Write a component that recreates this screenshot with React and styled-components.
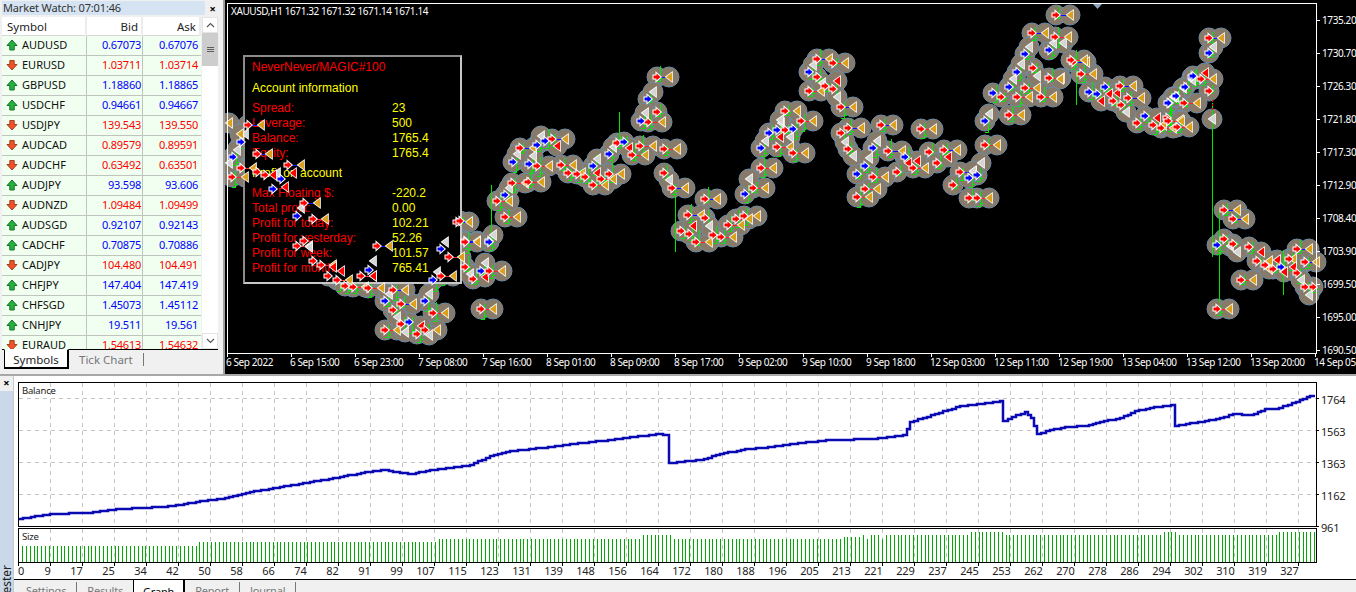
import React from "react";
import styled, { createGlobalStyle } from "styled-components";

const Global = createGlobalStyle`
  html, body { margin: 0; padding: 0; width: 1356px; height: 592px; overflow: hidden; background: #f0f0f0; }
  * { box-sizing: border-box; }
`;
const UI = `"Noto Sans", "Liberation Sans", sans-serif`;

const Page = styled.div`
  width: 1356px; height: 592px; display: flex; flex-direction: column; overflow: hidden;
  font-family: ${UI}; font-size: 11px; color: #000; background: #f0f0f0;
`;
const TopRow = styled.div`
  height: 376px; flex: none; display: flex; border-bottom: 2px solid #a8a8a8;
`;
const MarketPanel = styled.section`
  width: 225px; flex: none; display: flex; flex-direction: column; padding: 1px 3px 0 2px;
  border-right: 2px solid #a0a0a0; background: #f0f0f0;
`;
const TitleBar = styled.div`
  height: 14px; display: flex; align-items: center; justify-content: space-between; flex: none;
  font-size: 11px; line-height: 13px; letter-spacing: -0.15px;
`;
const TitleText = styled.div`
  width: 203px; height: 14px; background: #d5e3f2; padding-left: 1px; color: #333;
`;
const CloseBtn = styled.span`
  width: 15px; text-align: center; font-size: 11px; font-weight: 700; line-height: 13px; color: #000;
`;
const MarketBody = styled.div`
  margin-top: 2px; height: 332px; flex: none; display: flex; overflow: hidden;
`;
const Table = styled.div`
  width: 199px; flex: none; display: flex; flex-direction: column; overflow: hidden; background: #f0fff0;
`;
const HeadRow = styled.div`
  display: grid; grid-template-columns: 85px 56px 58px; height: 19px; flex: none; background: #fff;
  border-bottom: 1px solid #d8d8d8;
`;
const HeadCell = styled.div`
  padding: 0 3px 0 5px; line-height: 20px; font-size: 11.5px; color: #222;
  text-align: ${(p) => (p.$right ? "right" : "left")};
  border-right: 2px solid #ececec;
`;
const Row = styled.div`
  display: grid; grid-template-columns: 85px 56px 58px; height: 20px; flex: none;
  background: #f0fff0; border-bottom: 1px solid #bfc4bf;
`;
const SymCell = styled.div`
  display: flex; align-items: center; gap: 4px; padding: 0 0 2px 4px; color: #111; font-size: 11px;
  border-right: 1px solid #bfc4bf;
`;
const PriceCell = styled.div`
  text-align: right; line-height: 17px; font-size: 11px; letter-spacing: -0.25px;
  padding-right: ${(p) => (p.$last ? 3 : 1)}px;
  color: ${(p) => (p.$up ? "#0000ff" : "#ff0000")};
  border-right: ${(p) => (p.$last ? "none" : "1px solid #bfc4bf")};
`;
const Scroll = styled.div`
  width: 16px; margin-left: 1px; flex: none; display: flex; flex-direction: column; background: #fff;
`;
const ScrollBtn = styled.div`
  height: 16px; flex: none; display: flex; align-items: center; justify-content: center;
  border: 1px solid #e4e4e4; background: #fff;
`;
const Thumb = styled.div`
  height: 33px; flex: none; background: #cdcdcd; display: flex; flex-direction: column;
  align-items: center; justify-content: center; gap: 1px;
`;
const Grip = styled.span`
  width: 7px; height: 1px; background: #5c5c5c;
`;
const Track = styled.div`
  flex: 1;
`;
const TabBar = styled.div`
  height: 24px; flex: none; display: flex; align-items: flex-start; padding-left: 2px;
  border-top: 1px solid #000; margin-right: 2px;
`;
const ActiveTab = styled.div`
  height: 20px; width: 65px; margin-top: -1px; background: #fff; text-align: center;
  border: 1px solid #000; border-top-color: #fff; border-right-width: 2px; border-bottom-width: 2px;
  line-height: 19px; font-size: 11.5px; color: #222;
`;
const IdleTab = styled.div`
  height: 19px; padding: 0 10px; line-height: 19px; font-size: 11.5px; color: #777;
`;
const TabDivider = styled.span`
  width: 1px; height: 13px; margin-top: 3px; background: #777;
`;
const ChartPane = styled.section`
  position: relative; flex: 1; background: #000; overflow: hidden;
`;
const ChartSvg = styled.svg`
  position: absolute; inset: 0; display: block;
  text { font-family: ${UI}; font-size: 10px; fill: #fff; letter-spacing: -0.4px; }
`;
const InfoPanel = styled.div`
  position: absolute; left: 18px; top: 55px; width: 219px; height: 229px; padding: 3px 7px;
  background: #000;
  border: 2px solid #8c8c8c; border-right-color: #c8c8c8; border-bottom-color: #c8c8c8;
  font-family: "Liberation Sans", Arial, sans-serif; font-size: 12px; line-height: 15px;
`;
const InfoHead = styled.div`
  height: 15px; margin: ${(p) => p.$gap || 0}px 0 0; color: ${(p) => (p.$red ? "#ff0000" : "#ffff00")};
`;
const InfoRow = styled.div`
  display: grid; grid-template-columns: 140px 1fr; height: 15px; margin-top: ${(p) => p.$gap || 0}px;
`;
const InfoLabel = styled.span`
  color: #ff0000;
`;
const InfoValue = styled.span`
  color: #ffff00;
`;
const Tester = styled.section`
  flex: 1; display: flex; min-height: 0;
`;
const TesterSide = styled.div`
  width: 13px; flex: none; display: flex; flex-direction: column; position: relative; overflow: hidden;
`;
const SideClose = styled.div`
  height: 15px; flex: none; text-align: center; font-size: 11px; font-weight: 700; line-height: 14px;
`;
const SideStrip = styled.div`
  flex: 1; background: #c9d9ea; display: flex; align-items: flex-end; justify-content: center;
`;
const SideLabel = styled.span`
  writing-mode: vertical-rl; transform: rotate(180deg); font-size: 12px; line-height: 12px; color: #222;
  margin-bottom: -7px;
`;
const TesterMain = styled.div`
  flex: 1; display: flex; flex-direction: column; min-width: 0; border-left: 1px solid #c8c8c8;
`;
const GraphWrap = styled.div`
  height: 203px; flex: none; background: #fff;
`;
const GraphSvg = styled.svg`
  display: block;
  text { font-family: ${UI}; font-size: 11px; fill: #222; letter-spacing: -0.2px; }
`;
const ChartCaption = styled.text`
  font-size: 9.5px !important;
`;
const BottomTabs = styled.div`
  flex: 1; display: flex; align-items: flex-start; border-top: 1px solid #000; padding-left: 2px; overflow: hidden;
  background: #f0f0f0;
`;
const BottomTab = styled.div`
  height: 24px; padding: 3px 10px 0; font-size: 11px; line-height: 16px; flex: none; letter-spacing: -0.2px;
  color: ${(p) => (p.$active ? "#000" : "#777")};
  background: ${(p) => (p.$active ? "#fff" : "transparent")};
  ${(p) => p.$active && "border-left: 1px solid #000; border-right: 2px solid #000; margin-top: -1px; padding: 4px 9px 0; border-top: 1px solid #fff;"}
`;
const BottomDiv = styled.span`
  width: 1px; height: 11px; margin-top: 2px; flex: none; background: #777;
`;

/* ---------- data ---------- */
const SYMBOLS = [
  ["AUDUSD", 1, "0.67073", "0.67076"], ["EURUSD", 0, "1.03711", "1.03714"], ["GBPUSD", 1, "1.18860", "1.18865"],
  ["USDCHF", 1, "0.94661", "0.94667"], ["USDJPY", 0, "139.543", "139.550"], ["AUDCAD", 0, "0.89579", "0.89591"],
  ["AUDCHF", 0, "0.63492", "0.63501"], ["AUDJPY", 1, "93.598", "93.606"], ["AUDNZD", 0, "1.09484", "1.09499"],
  ["AUDSGD", 1, "0.92107", "0.92143"], ["CADCHF", 1, "0.70875", "0.70886"], ["CADJPY", 0, "104.480", "104.491"],
  ["CHFJPY", 1, "147.404", "147.419"], ["CHFSGD", 1, "1.45073", "1.45112"], ["CNHJPY", 1, "19.511", "19.561"],
  ["EURAUD", 0, "1.54613", "1.54632"],
];
const TIME_LABELS = ["6 Sep 2022","6 Sep 15:00","6 Sep 23:00","7 Sep 08:00","7 Sep 16:00","8 Sep 01:00","8 Sep 09:00","8 Sep 17:00","9 Sep 02:00","9 Sep 10:00","9 Sep 18:00","12 Sep 03:00","12 Sep 11:00","12 Sep 19:00","13 Sep 04:00","13 Sep 12:00","13 Sep 20:00","14 Sep 05:00"];
const PRICES = ["1735.20","1730.70","1726.30","1721.80","1717.30","1712.90","1708.40","1703.90","1699.50","1695.00","1690.50"];
const BAL_LABELS = [["1764",401],["1563",433],["1363",465],["1162",497],["961",529]];
const IDX = [0,9,17,25,34,42,50,58,66,74,82,91,99,107,115,123,131,139,148,156,164,172,180,188,196,205,213,221,229,237,245,253,262,270,278,286,294,302,310,319,327];

const GROUPS = [
  { o:[225,40], s:3,
    r:[[47,385,85],[22,412,60]], b:[[70,255,108],[95,343,132],[190,376,228],[238,490,277]],
    ra:[95,397,120,405], ba:[47,307,23,350,167,418,143,448],
    w:[60,283,36,330,13,368,155,400], x:[205,400,180,440,145,405], g:[13,250,45,283] },
  { o:[225,200], s:3,
    r:[[263,58,300],[335,240,372],[383,261,420],[430,264,468],[623,340,660],[480,391,516],[600,391,637],[648,227,685],[672,172,708],[792,212,830],[767,328,805],[215,138,252],[407,229,445],[287,196,325]],
    b:[[238,10,277],[695,65,733],[455,138,493],[503,270,540],[528,313,565],[720,124,757]],
    ra:[238,122,263,183,310,229,360,258,503,330,528,372,575,403,720,200,744,237],
    ba:[215,48,432,210,480,303,552,367,600,303,623,240,648,148,792,124,768,212],
    w:[228,25,445,182,493,283,515,350,540,395,612,405,613,283,637,215,660,127,805,105,735,222,780,190,252,140],
    x:[347,213,445,227,588,378,780,230,325,202], g:[] },
  { o:[460,60], s:3,
    r:[[565,187,605],[613,268,652],[540,259,578],[517,285,555],[325,340,365],[350,343,365],[422,357,458],[398,376,435],[447,343,484],[303,316,340],[230,319,268],[157,369,195],[205,367,243],[134,471,172],[708,547,747],[782,532,820],[805,495,843],[829,477,868],[853,468,892],[878,385,916],[902,325,940],[950,262,990],[110,424,146]],
    b:[[590,52,628],[277,238,316],[181,265,220],[14,545,52],[637,385,675],[734,418,771],[685,466,722],[0,484,27]],
    ra:[590,157,470,250,375,350,613,338,734,475,662,512,686,523,758,524,975,211,974,154],
    ba:[565,118,543,184,493,246,447,283,398,318,254,243,230,254,207,313,158,306,134,405,86,547,854,403,902,265,926,219,950,211],
    w:[580,97,555,160,460,262,412,298,243,228,220,288,172,283,148,383,100,525,628,360,747,497,868,358,916,243,964,190],
    x:[507,265,410,338,290,258,698,497], g:[] },
  { o:[780,40], s:3,
    r:[[158,70,196],[86,154,124],[278,412,316],[254,448,292],[230,472,268],[398,385,436],[422,268,460],[62,244,100],[38,340,76],[590,475,628],[614,316,652],[686,226,724],[710,170,748],[735,145,772],[782,172,820],[806,115,843]],
    b:[[110,57,148],[182,202,220],[205,265,244],[303,256,340],[325,334,365],[14,213,52],[493,330,531],[541,397,580]],
    ra:[110,112,134,138,158,148,182,280,205,328,350,396,447,336,472,370,14,270,518,435,566,475,662,172,758,85],
    ba:[86,97,278,323,254,379,230,403,374,352,38,267,590,405,566,415,615,243,638,160,686,141,710,96,734,43,806,30],
    w:[100,75,125,130,172,170,195,305,220,348,292,303,268,355,30,290,0,240,604,368,580,392,628,222,700,118,724,72,748,20,770,108,820,8,848,10],
    x:[172,122,410,363,385,370,505,350,0,292], g:[28,323] },
  { o:[1150,0], s:3,
    r:[[152,238,190],[103,310,141]], b:[[176,115,214]],
    ra:[176,274,50,355], ba:[176,160,126,232,104,262,78,288,56,310],
    w:[190,140,125,240,70,292,185,356], x:[165,218,20,355], g:[90,360] },
  { o:[1060,60], s:3,
    r:[[62,43,100],[278,196,310],[302,205,340],[325,183,362],[350,200,388],[375,130,412],[422,58,460],[542,660,580],[470,748,508],[638,628,626]],
    b:[[38,5,77],[181,78,220],[205,115,243],[493,451,531],[518,478,556],[710,568,748],[734,607,768],[686,598,700]],
    ra:[158,123,182,135,230,190,447,94,493,538,518,553,566,562,590,603,614,615,710,638,734,680,758,682],
    ba:[86,97,110,103,134,80,254,169,325,130,350,108,375,79,398,48,470,555,662,620],
    w:[197,155,458,183,510,558,532,575,724,660,748,705,368,85,345,110],
    x:[122,123,148,103,172,100,290,175,435,38,602,577,650,600,672,637,700,620], g:[0,58,626,603] },
  { o:[0,0], s:1,
    r:[[1055,37,1068],[1071,60,1084]],
    b:[[1056,15,1070],[1032,33,1045]],
    ra:[], ba:[], w:[], x:[], g:[] },
];

function buildMarkers() {
  const seen = new Set();
  const arrows = [], tris = [], links = [];
  const add = (list, kind, x, y, c) => {
    const k = kind + c + Math.round(x / 3) + "_" + Math.round(y / 3);
    if (seen.has(k)) return false;
    seen.add(k);
    list.push({ x, y, c });
    return true;
  };
  const pairs = (arr, fn) => { for (let i = 0; i < arr.length; i += 2) fn(arr[i], arr[i + 1]); };
  GROUPS.forEach(({ o, s, r, b, ra, ba, w, x, g }) => {
    const X = (v) => Math.round(o[0] + v / s);
    const Y = (v) => Math.round(o[1] + v / s);
    const pair = (p, line) => {
      const added = add(arrows, "a", X(p[0]), Y(p[1]), "#ff0000");
      add(tris, "t", X(p[2]), Y(p[1]), "#daa01e");
      if (added) links.push({ x1: X(p[0]), x2: X(p[2]), y: Y(p[1]), c: line });
    };
    r.forEach((p) => pair(p, "#ff2020"));
    b.forEach((p) => pair(p, "#1010ff"));
    pairs(ra, (a, c) => add(arrows, "a", X(a), Y(c), "#ff0000"));
    pairs(ba, (a, c) => add(arrows, "a", X(a), Y(c), "#0000ff"));
    pairs(w, (a, c) => add(tris, "t", X(a), Y(c), "#d4d4d4"));
    pairs(x, (a, c) => add(tris, "t", X(a), Y(c), "#ff0000"));
    pairs(g, (a, c) => add(tris, "t", X(a), Y(c), "#daa01e"));
  });
  return { arrows, tris, links };
}
const MARKS = buildMarkers();

function rnd(i) {
  const v = Math.sin(i * 12.9898 + 4.1) * 43758.5453;
  return v - Math.floor(v);
}
const LONG_WICKS = [[1212,103,257],[1219,210,302],[619,112,140],[675,195,252],[491,185,240],[1076,70,105],[1283,250,295]];

const BAL = [[19,521],[35,518],[50,516],[85,515],[100,513],[120,511],[140,510],[160,509],[180,507],[200,503],[225,500],[250,494],[280,489],[310,484],[340,479],[365,474],[385,472],[400,475],[412,476],[430,472],[450,470],[470,467],[490,458],[510,453],[540,450],[570,446],[600,443],[630,439],[660,436],[666,437],[669,465],[685,463],[700,462],[720,456],[745,451],[760,450],[790,446],[830,442],[870,441],[903,437],[910,424],[935,416],[960,408],[985,405],[1000,403],[1003,423],[1012,419],[1025,414],[1031,420],[1037,436],[1050,432],[1065,429],[1085,428],[1100,424],[1120,420],[1135,413],[1150,410],[1171,407],[1175,428],[1190,425],[1205,423],[1220,420],[1233,416],[1250,417],[1265,411],[1275,411],[1300,402],[1310,398],[1315,398]];
function balPath() {
  const out = [];
  let last = BAL[0][1];
  for (let i = 0; i < BAL.length - 1; i++) {
    const [x0, y0] = BAL[i], [x1, y1] = BAL[i + 1];
    const n = Math.max(1, Math.round((x1 - x0) / 4));
    for (let k = 0; k < n; k++) {
      const x = Math.round(x0 + ((x1 - x0) * k) / n);
      const y = Math.round(y0 + ((y1 - y0) * k) / n);
      out.push(`${x},${last}`, `${x},${y}`);
      last = y;
    }
  }
  out.push(`1315,${last}`);
  return out.join(" ");
}
function barTop(x) {
  if (x < 197) return 548;
  if (x < 435) return 544;
  if (x < 640) return 541;
  if (x < 672) return 537;
  if (x < 843) return 541;
  if (x < 860) return 539;
  if (x < 888) return Math.round(x) % 3 ? 537 : 541;
  if (x < 970) return 537;
  if (x < 1004) return 534;
  if (x < 1162) return 537;
  if (x < 1176) return 534;
  if (x < 1279) return 537;
  return 534;
}

/* ---------- drawings ---------- */
const UpIcon = () => (
  <svg width="12" height="12" viewBox="0 0 12 12">
    <path d="M6 1 L11 6.5 H8.2 V11 H3.8 V6.5 H1 Z" fill="#22b33c" stroke="#1b6e2a" strokeWidth="1" />
  </svg>
);
const DownIcon = () => (
  <svg width="12" height="12" viewBox="0 0 12 12">
    <path d="M6 11 L11 5.5 H8.2 V1.5 H3.8 V5.5 H1 Z" fill="#f0522a" stroke="#a8401f" strokeWidth="1" />
  </svg>
);
const Chevron = ({ down }) => (
  <svg width="9" height="6" viewBox="0 0 9 6">
    <path d={down ? "M1 1 L4.5 4.5 L8 1" : "M1 5 L4.5 1.5 L8 5"} fill="none" stroke="#555" strokeWidth="1.2" />
  </svg>
);

function ChartUnder() {
  const { arrows, tris } = MARKS;
  const all = [...arrows, ...tris];
  return (
    <ChartSvg width="1131" height="374" viewBox="225 0 1131 374">
      {all.map((m, i) => (
        <circle key={i} cx={m.x} cy={m.y} r="10" fill="#877a68" stroke="#6f8ca6" strokeWidth="1" />
      ))}
      {arrows.map((m, i) => {
        const wx = m.x + 3;
        const up = 3 + Math.round(rnd(i) * 9);
        const dn = 3 + Math.round(rnd(i + 50) * 9);
        return (
          <g key={i} stroke="#00e800" strokeWidth="1" shapeRendering="crispEdges">
            <line x1={wx} x2={wx} y1={m.y - up} y2={m.y + dn} />
            <line x1={wx - 3} x2={wx} y1={m.y + dn - 1} y2={m.y + dn - 1} />
            <line x1={wx} x2={wx + 3} y1={m.y + dn - 4} y2={m.y + dn - 4} />
          </g>
        );
      })}
      {LONG_WICKS.map(([x, a, b], i) => (
        <line key={i} x1={x} x2={x} y1={a} y2={b} stroke="#00e800" strokeWidth="1" shapeRendering="crispEdges" />
      ))}
      <line x1="1212" x2="1212" y1="100" y2="112" stroke="#ff0000" strokeDasharray="2 2" shapeRendering="crispEdges" />
    </ChartSvg>
  );
}

function ChartOver() {
  const { arrows, tris, links } = MARKS;
  return (
    <ChartSvg width="1131" height="374" viewBox="225 0 1131 374">
      {links.map((l, i) => (
        <line key={i} x1={l.x1} x2={l.x2} y1={l.y} y2={l.y} stroke={l.c} strokeWidth="1" shapeRendering="crispEdges" />
      ))}
      {tris.map((m, i) => (
        <path key={i} transform={`translate(${m.x} ${m.y})`} d="M-3 0 L3 -4.5 V4.5 Z" fill={m.c} stroke="#fff" strokeWidth="1.6" paintOrder="stroke" />
      ))}
      {arrows.map((m, i) => (
        <path key={i} transform={`translate(${m.x} ${m.y})`} d="M-3.5 -1.5 H-0.5 V-3.5 L3.5 0 L-0.5 3.5 V1.5 H-3.5 Z" fill={m.c} stroke="#fff" strokeWidth="2" paintOrder="stroke" />
      ))}
      <path d="M227 353 V3.5 H1316.5 V353 Z" fill="none" stroke="#fff" strokeWidth="1" shapeRendering="crispEdges" />
      <path d="M1093 4 H1102 L1097.5 9 Z" fill="#8fa6bf" />
      <text x="231" y="15">XAUUSD,H1  1671.32 1671.32 1671.14 1671.14</text>
      {PRICES.map((p, i) => {
        const y = 20.5 + i * 32.95;
        return (
          <g key={p}>
            <line x1="1316" x2="1320" y1={y} y2={y} stroke="#fff" shapeRendering="crispEdges" />
            <text x="1322" y={y + 3.5}>{p}</text>
          </g>
        );
      })}
      {TIME_LABELS.map((t, i) => {
        const x = 227 + i * 64;
        return (
          <g key={t}>
            <line x1={x + 0.5} x2={x + 0.5} y1="353" y2="357" stroke="#fff" shapeRendering="crispEdges" />
            <text x={x - 1} y="366">{t}</text>
          </g>
        );
      })}
    </ChartSvg>
  );
}

function Graph() {
  const ticks = [];
  for (let x = 50.5; x < 1316; x += 32) ticks.push(x);
  const bars = [];
  for (let x = 22; x < 1315; x += 3.857) bars.push(x);
  return (
    <GraphSvg width="1342" height="203" viewBox="14 378 1342 203">
      <g stroke="#c4c4c4" strokeDasharray="4 4" shapeRendering="crispEdges">
        {ticks.map((x) => (
          <line key={x} x1={x} x2={x} y1="385" y2="528" />
        ))}
        {ticks.map((x) => (
          <line key={"s" + x} x1={x} x2={x} y1="531" y2="564" />
        ))}
        {[400, 432, 464, 496].map((y) => (
          <line key={y} x1="19" x2="1316" y1={y} y2={y} />
        ))}
      </g>
      <polyline points={balPath()} fill="none" stroke="#0a0ab4" strokeWidth="2.5" />
      <rect x="18.5" y="384.5" width="1298" height="144" fill="none" stroke="#000" shapeRendering="crispEdges" />
      <rect x="18.5" y="530.5" width="1298" height="34" fill="none" stroke="#000" shapeRendering="crispEdges" />
      {bars.map((x) => {
        const r = Math.round(x);
        return <line key={x} x1={r + 0.5} x2={r + 0.5} y1={barTop(x)} y2="564" stroke="#00aa00" shapeRendering="crispEdges" />;
      })}
      {BAL_LABELS.map(([t, y]) => (
        <g key={t}>
          <line x1="1316" x2="1319" y1={y - 0.5} y2={y - 0.5} stroke="#000" shapeRendering="crispEdges" />
          <text x="1321" y={y + 5}>{t}</text>
        </g>
      ))}
      <ChartCaption x="22" y="396">Balance</ChartCaption>
      <ChartCaption x="22" y="542">Size</ChartCaption>
      {IDX.map((v, i) => {
        const tick = 18.5 + i * 32;
        return (
          <g key={v}>
            <line x1={tick} x2={tick} y1="564" y2="568" stroke="#000" shapeRendering="crispEdges" />
            <text x={i === 0 ? 24 : tick} y="577" textAnchor="end">{v}</text>
          </g>
        );
      })}
    </GraphSvg>
  );
}

const INFO = [
  ["Spread:", "23", 5], ["Leverage:", "500"], ["Balance:", "1765.4"], ["Equity:", "1765.4"],
];
const INFO2 = [
  ["Max Floating $:", "-220.2", 5], ["Total profit:", "0.00"], ["Profit for today:", "102.21"],
  ["Profit for yesterday:", "52.26"], ["Profit for week:", "101.57"], ["Profit for month:", "765.41"],
];

export default function App() {
  return (
    <Page>
      <Global />
      <TopRow>
        <MarketPanel>
          <TitleBar>
            <TitleText>Market Watch: 07:01:46</TitleText>
            <CloseBtn>×</CloseBtn>
          </TitleBar>
          <MarketBody>
            <Table>
              <HeadRow>
                <HeadCell>Symbol</HeadCell>
                <HeadCell $right>Bid</HeadCell>
                <HeadCell $right>Ask</HeadCell>
              </HeadRow>
              {SYMBOLS.map(([s, up, bid, ask]) => (
                <Row key={s}>
                  <SymCell>{up ? <UpIcon /> : <DownIcon />}{s}</SymCell>
                  <PriceCell $up={up}>{bid}</PriceCell>
                  <PriceCell $up={up} $last>{ask}</PriceCell>
                </Row>
              ))}
            </Table>
            <Scroll>
              <ScrollBtn><Chevron /></ScrollBtn>
              <Thumb><Grip /><Grip /><Grip /></Thumb>
              <Track />
              <ScrollBtn><Chevron down /></ScrollBtn>
            </Scroll>
          </MarketBody>
          <TabBar>
            <ActiveTab>Symbols</ActiveTab>
            <IdleTab>Tick Chart</IdleTab>
            <TabDivider />
          </TabBar>
        </MarketPanel>
        <ChartPane>
          <ChartUnder />
          <InfoPanel>
            <InfoHead $red>NeverNever/MAGIC#100</InfoHead>
            <InfoHead $gap={6}>Account information</InfoHead>
            {INFO.map(([l, v, g]) => (
              <InfoRow key={l} $gap={g}><InfoLabel>{l}</InfoLabel><InfoValue>{v}</InfoValue></InfoRow>
            ))}
            <InfoHead $gap={5}>Profit on account</InfoHead>
            {INFO2.map(([l, v, g]) => (
              <InfoRow key={l} $gap={g}><InfoLabel>{l}</InfoLabel><InfoValue>{v}</InfoValue></InfoRow>
            ))}
          </InfoPanel>
          <ChartOver />
        </ChartPane>
      </TopRow>
      <Tester>
        <TesterSide>
          <SideClose>×</SideClose>
          <SideStrip><SideLabel>Tester</SideLabel></SideStrip>
        </TesterSide>
        <TesterMain>
          <GraphWrap><Graph /></GraphWrap>
          <BottomTabs>
            <BottomTab>Settings</BottomTab><BottomDiv />
            <BottomTab>Results</BottomTab>
            <BottomTab $active>Graph</BottomTab>
            <BottomTab>Report</BottomTab><BottomDiv />
            <BottomTab>Journal</BottomTab><BottomDiv />
          </BottomTabs>
        </TesterMain>
      </Tester>
    </Page>
  );
}
